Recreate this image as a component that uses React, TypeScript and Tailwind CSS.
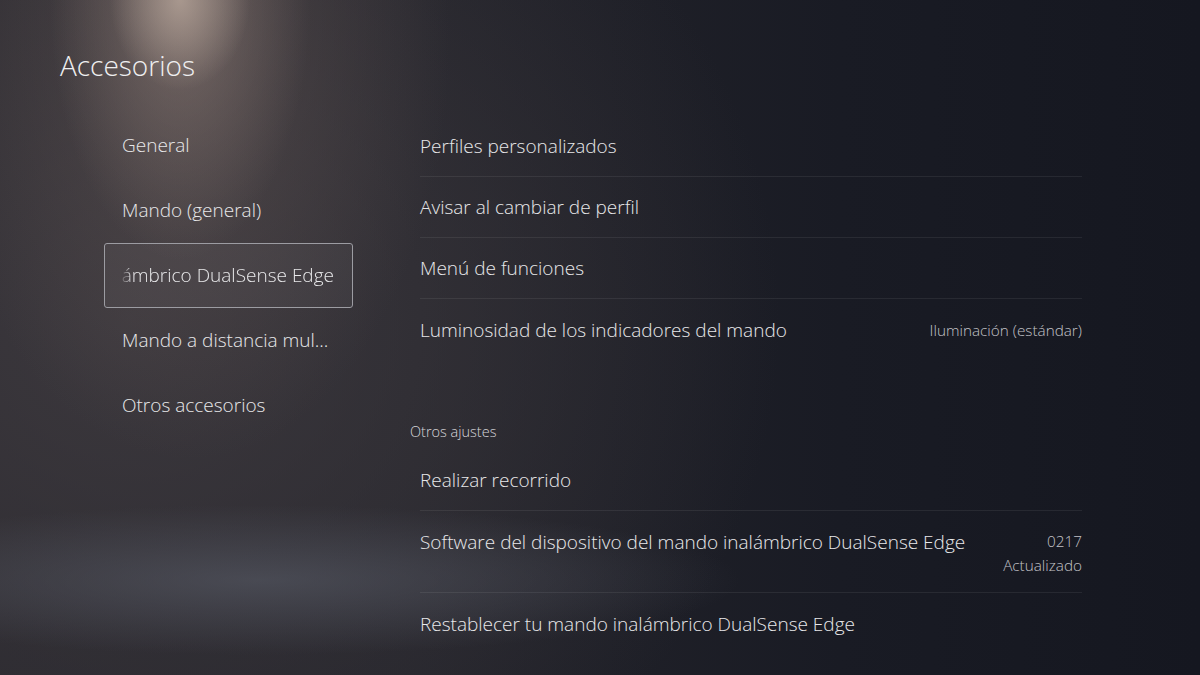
import React from "react";

const menu = [
  "General",
  "Mando (general)",
  "SELECTED",
  "Mando a distancia mul...",
  "Otros accesorios",
];

function Row({
  label,
  value,
  sub,
  last,
  tall,
}: {
  label: string;
  value?: string;
  sub?: string;
  last?: boolean;
  tall?: boolean;
}) {
  return (
    <div
      className={`flex justify-between ${tall ? "h-[82px] pt-[18px]" : "h-[61px] items-center"} ${
        last ? "" : "border-b border-white/[0.07]"
      }`}
    >
      <span className="text-[19px] font-light text-[#e8e8ea] leading-[26px]">{label}</span>
      {value && (
        <div className="flex flex-col items-end text-[15.3px] font-light text-[#c2c2c7] leading-[24px]">
          <span>{value}</span>
          {sub && <span>{sub}</span>}
        </div>
      )}
    </div>
  );
}

export default function App() {
  return (
    <div
      className="relative w-[1200px] h-[675px] overflow-hidden text-white bg-[#181a22] [font-family:'Open_Sans','Noto_Sans',sans-serif]
      bg-[radial-gradient(ellipse_70px_90px_at_180px_0px,rgba(190,172,160,0.7),rgba(190,172,160,0)),radial-gradient(ellipse_130px_260px_at_180px_0px,rgba(150,132,125,0.55),rgba(150,132,125,0)),radial-gradient(ellipse_260px_420px_at_190px_40px,rgba(105,92,90,0.5),rgba(105,92,90,0)),radial-gradient(ellipse_480px_75px_at_260px_580px,rgba(92,96,108,0.55),rgba(92,96,108,0)),radial-gradient(ellipse_650px_600px_at_130px_320px,rgba(62,58,63,0.9),rgba(62,58,63,0)),linear-gradient(90deg,#28272d_0%,#24242b_35%,#191b24_70%,#151720_100%)]"
    >
      <h1 className="pl-[60px] pt-[46px] text-[28px] font-light leading-[38px] text-[#efeff0]">
        Accesorios
      </h1>

      <div className="flex pl-[104px] pt-[29px]">
        {/* side menu */}
        <div className="w-[249px] flex flex-col">
          {menu.map((m) =>
            m === "SELECTED" ? (
              <div
                key={m}
                className="h-[65px] flex items-center rounded-[3px] border-[1.5px] border-[#9c9ca2] bg-white/[0.04] pl-[15px] pr-[18px]"
              >
                <div className="flex-1 overflow-hidden flex justify-end [mask-image:linear-gradient(90deg,transparent_0px,black_12px)]">
                  <span className="whitespace-nowrap text-[19px] font-light text-[#e8e8ea]">
                    Mando inalámbrico DualSense Edge
                  </span>
                </div>
              </div>
            ) : (
              <div
                key={m}
                className="h-[65px] flex items-center pl-[18px] text-[19px] font-light text-[#e8e8ea]"
              >
                {m}
              </div>
            )
          )}
        </div>

        {/* settings list */}
        <div className="ml-[57px] w-[672px] pt-[3px]">
          <div className="ml-[10px]">
            <Row label="Perfiles personalizados" />
            <Row label="Avisar al cambiar de perfil" />
            <Row label="Menú de funciones" />
            <Row label="Luminosidad de los indicadores del mando" value="Iluminación (estándar)" last />
          </div>
          <div className="h-[90px] pt-[62px] text-[14.5px] leading-[20px] font-light text-[#d6d6da]">
            Otros ajustes
          </div>
          <div className="ml-[10px]">
            <Row label="Realizar recorrido" />
            <Row
              label="Software del dispositivo del mando inalámbrico DualSense Edge"
              value="0217"
              sub="Actualizado"
              tall
            />
            <Row label="Restablecer tu mando inalámbrico DualSense Edge" last />
          </div>
        </div>
      </div>
    </div>
  );
}
